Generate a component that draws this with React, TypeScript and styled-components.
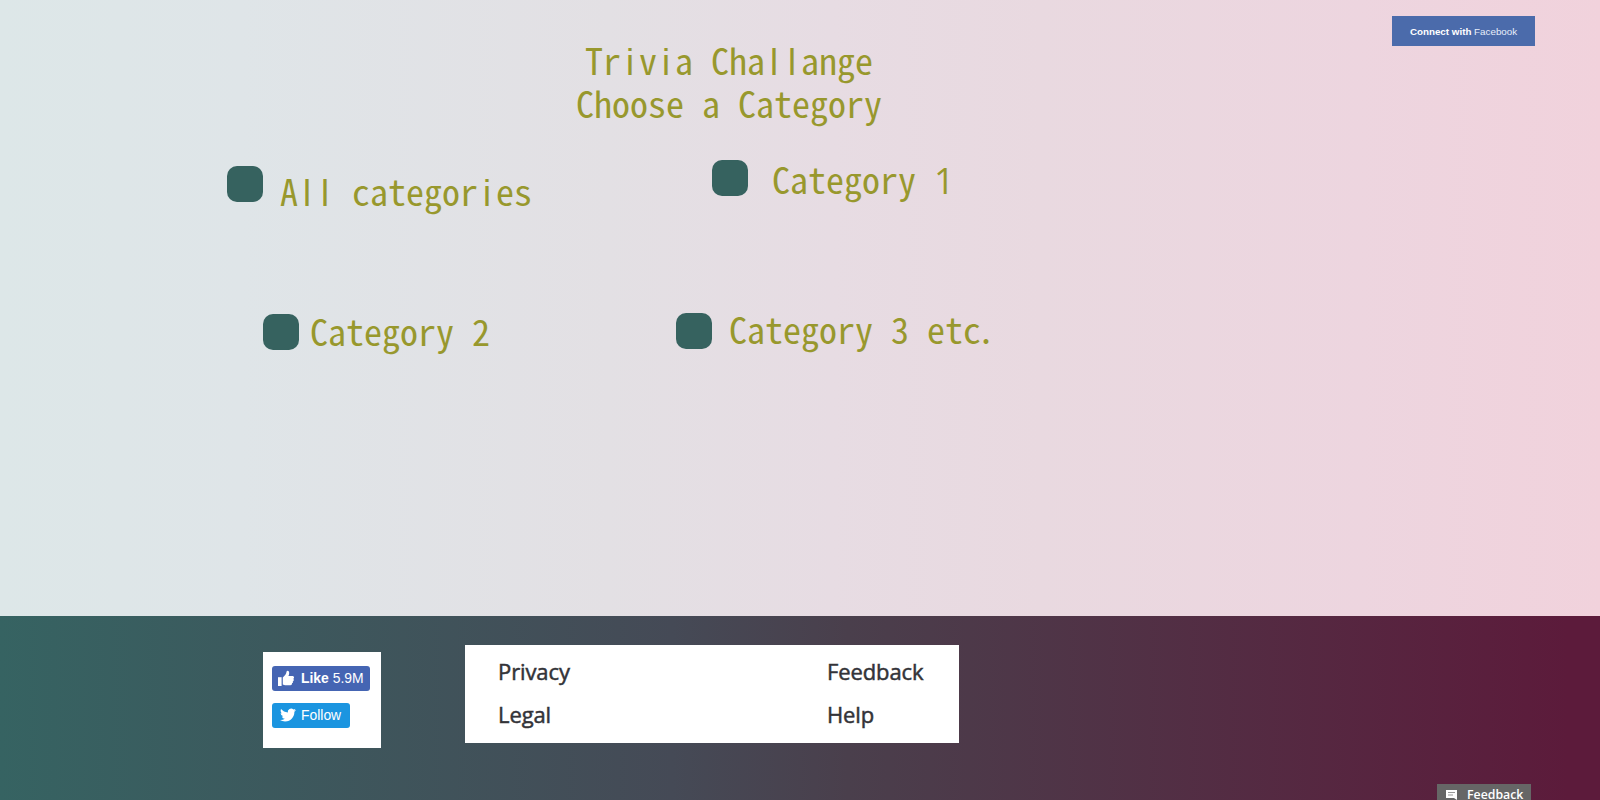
import React from "react";
import styled, { createGlobalStyle } from "styled-components";

const Global = createGlobalStyle`
  * { box-sizing: border-box; }
  html, body { margin: 0; padding: 0; overflow: hidden; }
`;

const Page = styled.div`
  width: 1600px;
  height: 800px;
  display: flex;
  flex-direction: column;
  overflow: hidden;
`;

const Main = styled.main`
  height: 616px;
  display: flex;
  justify-content: space-between;
  align-items: flex-start;
  padding-right: 65px;
  background: linear-gradient(90deg, #dde7e8 0%, #dfe5e8 15%, #e3e0e4 38%, #e7dce3 52%, #e9d9e0 65%, #edd5df 85%, #f1d2dc 100%);
`;

const Content = styled.div`
  width: 1200px;
  padding-top: 38px;
`;

const gothic = `
  font-family: "Noto Sans CJK JP", "Liberation Mono", monospace;
  font-feature-settings: "hwid";
  font-size: 36px;
  font-weight: 400;
  line-height: 43px;
  color: #98982d;
  white-space: pre;
`;

const Heading = styled.h1`
  ${gothic}
  margin: 0 0 0 576px;
  width: 306px;
  text-align: center;
`;

/* One half-width cell holding a plain, serifless glyph */
const Cell = styled.span<{ $face?: string; $align?: string }>`
  display: inline-block;
  width: 18px;
  line-height: 1;
  text-align: ${(p) => p.$align ?? "center"};
  font-family: ${(p) => p.$face ?? '"Liberation Sans", Arial, sans-serif'};
  font-feature-settings: normal;
`;

const Row = styled.div<{ $top: number; $left: number }>`
  display: flex;
  align-items: flex-start;
  margin-top: ${(p) => p.$top}px;
  padding-left: ${(p) => p.$left}px;
`;

const Option = styled.label<{ $width: number; $gap: number; $down?: number }>`
  display: flex;
  align-items: flex-start;
  width: ${(p) => p.$width}px;
  gap: ${(p) => p.$gap}px;
  margin-top: ${(p) => p.$down ?? 0}px;
`;

const Box = styled.span`
  flex: none;
  width: 36px;
  height: 36px;
  border-radius: 10px;
  background: #36625f;
`;

const Label = styled.span<{ $drop: number }>`
  ${gothic}
  margin-top: ${(p) => p.$drop}px;
`;

const Connect = styled.button`
  display: flex;
  align-items: center;
  justify-content: center;
  width: 143px;
  height: 30px;
  margin: 16px 0 0;
  padding: 0;
  border: 0;
  background: #4b6bab;
  color: #e8eefa;
  font: 9.8px "Liberation Sans", Arial, sans-serif;
  white-space: pre;

  b { color: #fff; }
`;

const Footer = styled.footer`
  height: 184px;
  display: flex;
  align-items: flex-start;
  padding-left: 263px;
  background: linear-gradient(90deg, #366362 0%, #454a56 42%, #4a3f4c 53%, #5c1b3b 98%);
`;

const Social = styled.div`
  display: flex;
  flex-direction: column;
  align-items: flex-start;
  gap: 12px;
  width: 118px;
  height: 96px;
  margin-top: 36px;
  padding: 14px 9px;
  background: #fff;
`;

const SocialButton = styled.button<{ $width: number; $color: string; $pad: number; $gap: number }>`
  display: flex;
  align-items: center;
  width: ${(p) => p.$width}px;
  height: 25px;
  padding: 0 0 1px ${(p) => p.$pad}px;
  gap: ${(p) => p.$gap}px;
  border: 0;
  border-radius: 3px;
  background: ${(p) => p.$color};
  color: #fff;
  font: 13.9px "Liberation Sans", Arial, sans-serif;
  white-space: pre;
`;

const Links = styled.nav`
  display: grid;
  grid-template-columns: 329px 1fr;
  grid-auto-rows: 43px;
  align-items: center;
  width: 494px;
  height: 98px;
  margin: 29px 0 0 84px;
  padding: 4px 0 0 33px;
  background: #fff;
`;

const FooterLink = styled.a`
  color: #333338;
  font: 500 22px "Open Sans", "Noto Sans", sans-serif;
  letter-spacing: -0.1px;
  -webkit-text-stroke: 0.5px #333338;
`;

const FeedbackTab = styled.button`
  display: flex;
  align-items: flex-start;
  gap: 10px;
  width: 94px;
  height: 16px;
  margin: 168px 0 0 478px;
  padding: 2px 0 0 9px;
  border: 0;
  background: #666;
  color: #fff;
  font: 600 12.3px/17px "Open Sans", "Noto Sans", sans-serif;

  svg { margin-top: 4px; flex: none; }
`;

export default function App() {
  return (
    <>
      <Global />
      <Page>
        <Main>
          <Content>
            <Heading>
              Tr<Cell>i</Cell>v<Cell>i</Cell>a Cha<Cell>l</Cell><Cell>l</Cell>{"ange\nChoose a Category"}
            </Heading>
            <Row $top={36} $left={227}>
              <Option $width={485} $gap={17} $down={6}>
                <Box />
                <Label $drop={3}>A<Cell>l</Cell><Cell>l</Cell> categor<Cell>i</Cell>es</Label>
              </Option>
              <Option $width={300} $gap={24}>
                <Box />
                <Label $drop={-3}>Category <Cell $face='"Open Sans"' $align="left">1</Cell></Label>
              </Option>
            </Row>
            <Row $top={101} $left={263}>
              <Option $width={413} $gap={11} $down={1}>
                <Box />
                <Label $drop={-5}>Category 2</Label>
              </Option>
              <Option $width={340} $gap={17}>
                <Box />
                <Label $drop={-6}>Category 3 etc<Cell $face='"Noto Sans CJK JP"' $align="left">.</Cell></Label>
              </Option>
            </Row>
          </Content>
          <Connect><b>Connect with</b> Facebook</Connect>
        </Main>
        <Footer>
          <Social>
            <SocialButton $width={98} $color="#4565b3" $pad={6} $gap={7}>
              <svg width="16" height="16" viewBox="0 0 16 16" fill="#fff">
                <path d="M0 7.2h3.6V16H0z" />
                <path d="M4.8 7.4C7 5.8 8.2 4.200 8.600 1.600 8.800.2 11.200.2 11.200 3c0 1.200-.4 2.200-.8 3h4c2 0 2 2.400.8 2.800 1 .6.7 2.200-.5 2.400.7.8.2 2-.8 2.100.4 1-.3 1.900-1.500 1.900H8c-1.400 0-2.200-.6-3.200-.8z" />
              </svg>
              <span><b>Like</b> 5.9M</span>
            </SocialButton>
            <SocialButton $width={78} $color="#1b95e0" $pad={8} $gap={5}>
              <svg width="16" height="16" viewBox="0 1 24 22" fill="#fff">
                <path d="M23.950 4.570a10 10 0 0 1-2.820.78 4.960 4.960 0 0 0 2.160-2.730c-.95.560-2 .960-3.130 1.190a4.920 4.920 0 0 0-8.380 4.480C7.690 8.100 4.070 6.130 1.640 3.160a4.820 4.820 0 0 0-.67 2.480c0 1.710.87 3.210 2.190 4.100a4.900 4.900 0 0 1-2.230-.62v.06a4.920 4.920 0 0 0 3.950 4.830 5 5 0 0 1-2.210.08 4.940 4.940 0 0 0 4.600 3.420A9.870 9.870 0 0 1 0 19.540a13.990 13.990 0 0 0 7.550 2.210c9.050 0 14-7.500 14-13.980 0-.21 0-.42-.02-.63a9.940 9.940 0 0 0 2.420-2.570z" />
              </svg>
              <span>Follow</span>
            </SocialButton>
          </Social>
          <Links>
            <FooterLink>Privacy</FooterLink>
            <FooterLink>Feedback</FooterLink>
            <FooterLink>Legal</FooterLink>
            <FooterLink>Help</FooterLink>
          </Links>
          <FeedbackTab>
            <svg width="11" height="10" viewBox="0 0 11 10">
              <path d="M0 0h11v10L8 8H0z" fill="#fff" />
              <path d="M2 2.500h7M2 5h5" stroke="#999" />
            </svg>
            Feedback
          </FeedbackTab>
        </Footer>
      </Page>
    </>
  );
}
